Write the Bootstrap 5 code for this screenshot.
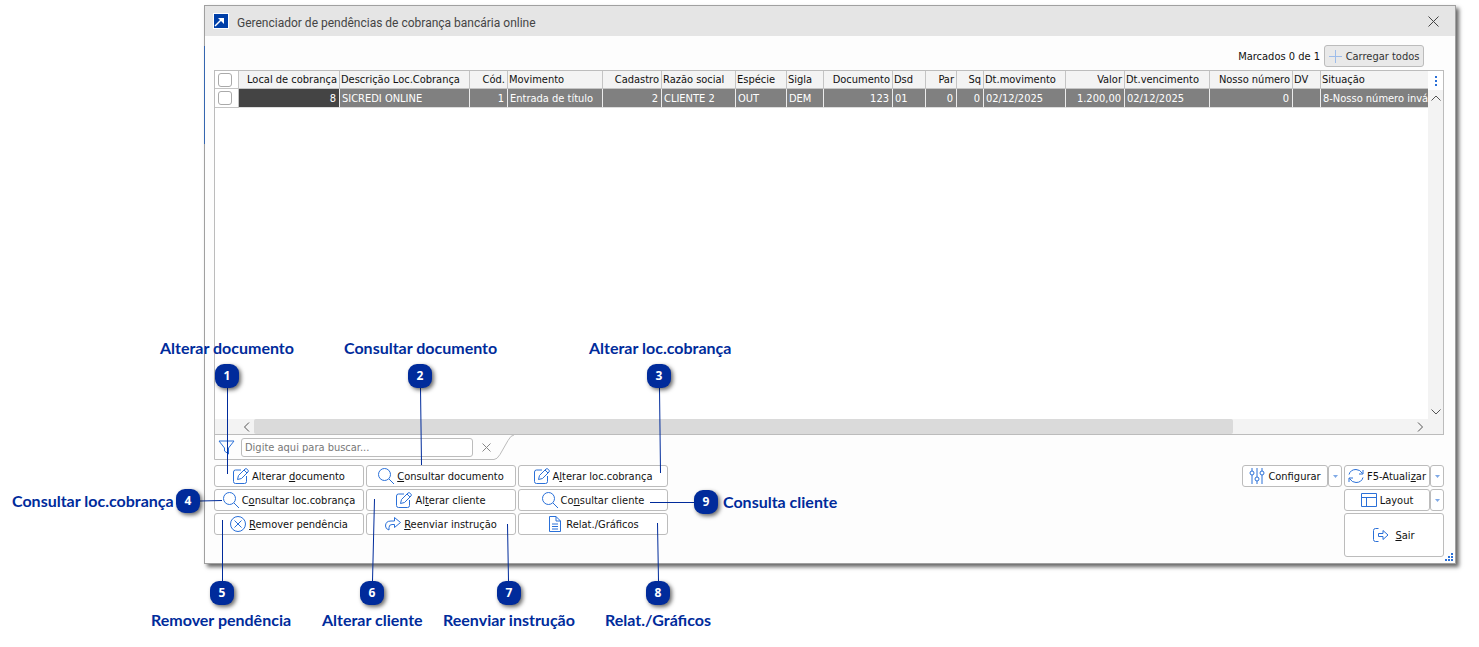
<!DOCTYPE html>
<html lang="pt-BR">
<head>
<meta charset="utf-8">
<meta name="viewport" content="width=device-width, initial-scale=1">
<title>Gerenciador de pendências de cobrança bancária online</title>
<link href="https://cdn.jsdelivr.net/npm/bootstrap@5.3.0/dist/css/bootstrap.min.css" rel="stylesheet">
<style>
body { font: 11px/16px "DejaVu Sans Condensed", "DejaVu Sans", sans-serif; color: #111; background: #fff; }
.stage { padding: 5px 23px 0 204px; min-height: 640px; min-width: 1100px; }
.win { border: 1px solid #a0a0a0; background: #fdfdfd; box-shadow: 3px 3px 4px rgba(0,0,0,.6); }
.win::before { content: ""; position: absolute; left: -1px; top: 40px; width: 1px; height: 98px; background: #3566b0; }
.titlebar { height: 30px; background: #e5e5e5; padding: 0 12px 0 8px; font: 12px/16px Roboto, sans-serif; color: #444; }
.winbody { padding: 9px 11px 6px 9px; }
.iconbtn { border: 0; background: none; padding: 0; line-height: 0; }
.tool { display: flex; align-items: center; justify-content: center; gap: 3px; height: 22px; padding: 0; border: 1px solid #bcbcbc; border-radius: 3px; background: #fff; color: #111; white-space: nowrap; }
.tool svg, .iconbtn svg { flex: none; }
.tool svg { fill: none; stroke: #2a70d8; }
.tool span { padding-top: 2px; }
.load { background: #e9e9e9; color: #333; width: 100px; gap: 4px; }
.gridbox { border: 1px solid #bcbcbc; background: #fff; }
.viewport { height: 348px; overflow: hidden; }
.datagrid { table-layout: fixed; width: 1260px; border-collapse: separate; border-spacing: 0; line-height: 17px; }
.datagrid th, .datagrid td { font-weight: 400; border-right: 1px solid #c4c4c4; padding: 0 3px 0 2px; overflow: hidden; white-space: nowrap; }
.datagrid th { background: #f3f3f3; border-bottom: 1px solid #c4c4c4; height: 18px; padding: 0 2px 0 1px; }
.datagrid td { background: #808080; color: #fff; height: 19px; border-bottom: 1px solid #ddd; border-right-color: #ececec; }
.datagrid td.now { background: #444; }
.datagrid .pick { background: #fff; border-color: #c4c4c4; padding: 0 0 0 3px; }
.datagrid .pick input { display: block; appearance: none; width: 14px; height: 14px; margin: 0; border: 1px solid #aaa; border-radius: 3px; background: #fff; }
.vbar { width: 15px; background: #f3f3f3; }
.vbar .iconbtn { height: 15px; }
.vbar .dots { height: 19px; background: #fff; }
.hbar { height: 15px; background: #f3f3f3; padding: 0 15px 0 24px; }
.thumb { width: 979px; background: #dadada; border-radius: 2px; }
.search { height: 26px; width: 301px; padding: 0 0 1px 4px; }
.search input { width: 232px; height: 19px; border: 1px solid #bcbcbc; border-radius: 3px; padding: 0 3px; margin: 0 9px 0 5px; color: #777; }
.search input::placeholder { color: #777; opacity: 1; }
.tasks { display: grid; grid-template-columns: repeat(3, 150px); gap: 2px; }
.side { display: grid; grid-template-columns: 86px 14px 2px 86px 14px; row-gap: 2px; }
.leave { grid-column: 4 / 6; height: 44px; gap: 6px; }
.grip { right: 2px; bottom: 2px; }
.callout { position: absolute; font: 700 16px/20px Lato, sans-serif; color: #002b9b; white-space: nowrap; }
.pin { position: absolute; width: 24px; height: 24px; border-radius: 9px; background: #002b9b; color: #fff; font: 700 12px/24px "Open Sans", sans-serif; text-align: center; box-shadow: 2px 2px 4px rgba(0,0,0,.6); }
.leaders { left: 0; top: 0; pointer-events: none; stroke: #002b9b; }
</style>
</head>
<body>
<svg width="0" height="0" class="position-absolute" aria-hidden="true">
<symbol id="edit" viewBox="0 0 16 16"><path d="M8 2H2.500Q.5 2 .5 4v9.500q0 2 2 2h9q2 0 2-2V8M5.500 7.500L12 1q1-1 2.500 0.500t.5 2.500L8.500 10.500l-4 1zM11 2l3 3"/></symbol>
<symbol id="find" viewBox="0 0 16 16"><circle cx="6.500" cy="6.500" r="6"/><path d="M11 11l5 5"/></symbol>
<symbol id="drop" viewBox="0 0 5 3"><path d="M0 0h5L2.500 3z" fill="#7fa9e6" stroke="none"/></symbol>
</svg>
<div class="stage position-relative">
<main class="win position-relative">
<header class="titlebar d-flex align-items-center">
<svg width="16" height="16" viewBox="0 0 16 16"><path fill="#fff" d="M0 0h16v16H0z"/><path fill="#003fa8" d="M1 1h14v14H1z"/><path d="M2 13l7-7" fill="none" stroke="#fff" stroke-width="1.500"/><path d="M5 5h6v6z" fill="#fff"/></svg>
<span class="ms-2 pt-1">Gerenciador de pendências de cobrança bancária online</span>
<button class="iconbtn ms-auto me-1" aria-label="Fechar"><svg width="11" height="11" viewBox="0 0 11 11" stroke="#444"><path d="M.5.5l10 10M10.500.5l-10 10"/></svg></button>
</header>
<div class="winbody">
<div class="d-flex justify-content-end gap-1 pe-3 me-1">
<span class="pt-1 mt-n1">Marcados 0 de 1</span>
<button class="tool load"><svg width="13" height="13" viewBox="0 0 13 13"><path d="M6.500 0v13M0 6.500h13" style="stroke:#9dbcea"/></svg><span>Carregar todos</span></button>
</div>
<div class="gridbox" style="margin-top:3px">
<div class="d-flex">
<div class="viewport flex-grow-1">
<table class="datagrid">
<colgroup><col style="width:24px"><col style="width:101px"><col style="width:130px"><col style="width:38px"><col style="width:95px"><col style="width:59px"><col style="width:74px"><col style="width:51px"><col style="width:37px"><col style="width:69px"><col style="width:33px"><col style="width:31px"><col style="width:27px"><col style="width:82px"><col style="width:59px"><col style="width:85px"><col style="width:83px"><col style="width:28px"><col></colgroup>
<thead><tr><th class="pick"><input type="checkbox" aria-label="Marcar todos"></th><th class="text-end">Local de cobrança</th><th>Descrição Loc.Cobrança</th><th class="text-end">Cód.</th><th>Movimento</th><th class="text-end">Cadastro</th><th>Razão social</th><th>Espécie</th><th>Sigla</th><th class="text-end">Documento</th><th>Dsd</th><th class="text-end">Par</th><th class="text-end">Sq</th><th>Dt.movimento</th><th class="text-end">Valor</th><th>Dt.vencimento</th><th class="text-end">Nosso número</th><th>DV</th><th>Situação</th></tr></thead>
<tbody><tr><td class="pick"><input type="checkbox" aria-label="Marcar linha"></td><td class="text-end now">8</td><td>SICREDI ONLINE</td><td class="text-end">1</td><td>Entrada de título</td><td class="text-end">2</td><td>CLIENTE 2</td><td>OUT</td><td>DEM</td><td class="text-end">123</td><td>01</td><td class="text-end">0</td><td class="text-end">0</td><td>02/12/2025</td><td class="text-end">1.200,00</td><td>02/12/2025</td><td class="text-end">0</td><td></td><td>8-Nosso número inváli</td></tr></tbody>
</table>
</div>
<div class="vbar d-flex flex-column flex-shrink-0">
<button class="iconbtn dots" aria-label="Colunas"><svg width="2" height="10" viewBox="0 0 2 10" fill="#2a70d8"><path d="M0 0h2v2H0zM0 4h2v2H0zM0 8h2v2H0z"/></svg></button>
<button class="iconbtn" aria-label="Acima"><svg width="10" height="6" viewBox="0 0 10 6" fill="none" stroke="#555"><path d="M.5 5.500L5 1l4.500 4.500"/></svg></button>
<button class="iconbtn mt-auto" aria-label="Abaixo"><svg width="10" height="6" viewBox="0 0 10 6" fill="none" stroke="#555"><path d="M.5.5L5 5l4.500-4.500"/></svg></button>
</div>
</div>
<div class="hbar d-flex">
<button class="iconbtn px-1" aria-label="Esquerda"><svg width="7" height="10" viewBox="0 0 7 10" fill="none" stroke="#555"><path d="M6 .5L1.500 5 6 9.500"/></svg></button>
<div class="flex-grow-1 d-flex"><div class="thumb"></div></div>
<button class="iconbtn px-1" aria-label="Direita"><svg width="7" height="10" viewBox="0 0 7 10" fill="none" stroke="#555"><path d="M1 .5L5.500 5 1 9.500"/></svg></button>
</div>
</div>
<form class="search d-flex align-items-center position-relative mb-1">
<svg class="position-absolute start-0 top-0" width="301" height="26" viewBox="0 0 301 26" fill="none" stroke="#bcbcbc"><path d="M.5 0v24.500H280q3 0 6-5l8-14q3-5.500 6-5.500"/></svg>
<svg class="position-relative flex-shrink-0" width="18" height="15" viewBox="0 0 18 15" fill="none" stroke="#2a70d8"><path d="M1 1h15l-5.500 7v6L6.500 11V8z"/></svg>
<input class="position-relative" type="text" placeholder="Digite aqui para buscar..." aria-label="Buscar">
<button type="button" class="iconbtn position-relative" aria-label="Limpar"><svg width="9" height="9" viewBox="0 0 9 9" stroke="#888"><path d="M.5.5l8 8M8.500.5l-8 8"/></svg></button>
</form>
<div class="d-flex justify-content-between align-items-start">
<div class="tasks">
<button class="tool"><svg width="16" height="16"><use href="#edit"/></svg><span>Alterar <u>d</u>ocumento</span></button>
<button class="tool"><svg width="16" height="16"><use href="#find"/></svg><span><u>C</u>onsultar documento</span></button>
<button class="tool"><svg width="16" height="16"><use href="#edit"/></svg><span>A<u>l</u>terar loc.cobrança</span></button>
<button class="tool"><svg width="16" height="16"><use href="#find"/></svg><span>C<u>o</u>nsultar loc.cobrança</span></button>
<button class="tool"><svg width="16" height="16"><use href="#edit"/></svg><span>Al<u>t</u>erar cliente</span></button>
<button class="tool"><svg width="16" height="16"><use href="#find"/></svg><span>Co<u>n</u>sultar cliente</span></button>
<button class="tool"><svg width="16" height="16" viewBox="0 0 16 16"><circle cx="8" cy="8" r="7.500"/><path d="M4.500 4.500l7 7M11.500 4.500l-7 7"/></svg><span><u>R</u>emover pendência</span></button>
<button class="tool"><svg width="16" height="16" viewBox="0 0 16 16"><path d="M9.500 1.500l6 5-6 5v-3H7q-3 0-3 3v2.500Q.5 13 .5 10 .5 5 6 5h3.500z"/></svg><span><u>R</u>eenviar instrução</span></button>
<button class="tool"><svg width="16" height="16" viewBox="0 0 16 16"><path d="M3 .5h6l4.500 4.500v10.500H2.500V.5zM9 .5V5h4.500M5 8h6M5 10.500h6M5 13h6"/></svg><span>Relat./Gráficos</span></button>
</div>
<div class="side">
<button class="tool"><svg width="16" height="16" viewBox="0 0 16 16"><path d="M3 0v3M3 7v9M8 0v9M8 13v3M13 0v3M13 7v9"/><circle cx="3" cy="5" r="2"/><circle cx="8" cy="11" r="2"/><circle cx="13" cy="5" r="2"/></svg><span>Configurar</span></button>
<button class="tool" aria-label="Opções de configuração"><svg width="5" height="3"><use href="#drop"/></svg></button><span></span>
<button class="tool"><svg width="16" height="16" viewBox="0 0 16 16"><path d="M1 6.500Q2.500 1.500 8 1.500q4 0 6.500 4M15 2v4h-4M15 9.500Q13.500 14.500 8 14.500q-4 0-6.500-4M1 14v-4h4"/></svg><span>F5-Atuali<u>z</u>ar</span></button>
<button class="tool" aria-label="Opções de atualização"><svg width="5" height="3"><use href="#drop"/></svg></button>
<span></span><span></span><span></span>
<button class="tool"><svg width="16" height="14" viewBox="0 0 16 14"><path d="M.5.5h15v13H.5zM.5 4.500h15M5.500 4.500v9"/></svg><span>Layout</span></button>
<button class="tool" aria-label="Opções de layout"><svg width="5" height="3"><use href="#drop"/></svg></button>
<span></span><span></span><span></span>
<button class="tool leave"><svg width="16" height="14" viewBox="0 0 16 14"><path d="M5.500.5h-3q-2 0-2 2v9q0 2 2 2h3M5.500 5.500H10v-3L15 7l-5 4.500v-3H5.500z"/></svg><span><u>S</u>air</span></button>
</div>
</div>
</div>
<svg class="grip position-absolute" width="8" height="8" viewBox="0 0 8 8" fill="#2a70d8"><path d="M6 0h2v2H6zM6 3h2v2H6zM3 3h2v2H3zM6 6h2v2H6zM3 6h2v2H3zM0 6h2v2H0z"/></svg>
</main>
<svg class="leaders position-absolute" width="860" height="640" viewBox="0 0 860 640"><path d="M227.500 388v86M420.500 388l1 77M659.500 388l1 85M200 501l22-.5M222.500 581v-61M372.500 581l2-82M508.500 581l-1-57M658.500 581l-1-58M650 502.500h45"/></svg>
<span class="callout" style="left:160px;top:338px">Alterar documento</span><span class="pin" style="left:215px;top:364px">1</span>
<span class="callout" style="left:344px;top:338px">Consultar documento</span><span class="pin" style="left:408px;top:364px">2</span>
<span class="callout" style="left:589px;top:338px">Alterar loc.cobrança</span><span class="pin" style="left:647px;top:364px">3</span>
<span class="callout" style="left:12px;top:491px">Consultar loc.cobrança</span><span class="pin" style="left:176px;top:489px">4</span>
<span class="callout" style="left:151px;top:610px">Remover pendência</span><span class="pin" style="left:210px;top:581px">5</span>
<span class="callout" style="left:322px;top:610px">Alterar cliente</span><span class="pin" style="left:360px;top:581px">6</span>
<span class="callout" style="left:443px;top:610px">Reenviar instrução</span><span class="pin" style="left:497px;top:581px">7</span>
<span class="callout" style="left:605px;top:610px">Relat./Gráficos</span><span class="pin" style="left:646px;top:581px">8</span>
<span class="callout" style="left:723px;top:492px">Consulta cliente</span><span class="pin" style="left:694px;top:490px">9</span>
</div>
<script src="https://cdn.jsdelivr.net/npm/bootstrap@5.3.0/dist/js/bootstrap.bundle.min.js"></script>
</body>
</html>
